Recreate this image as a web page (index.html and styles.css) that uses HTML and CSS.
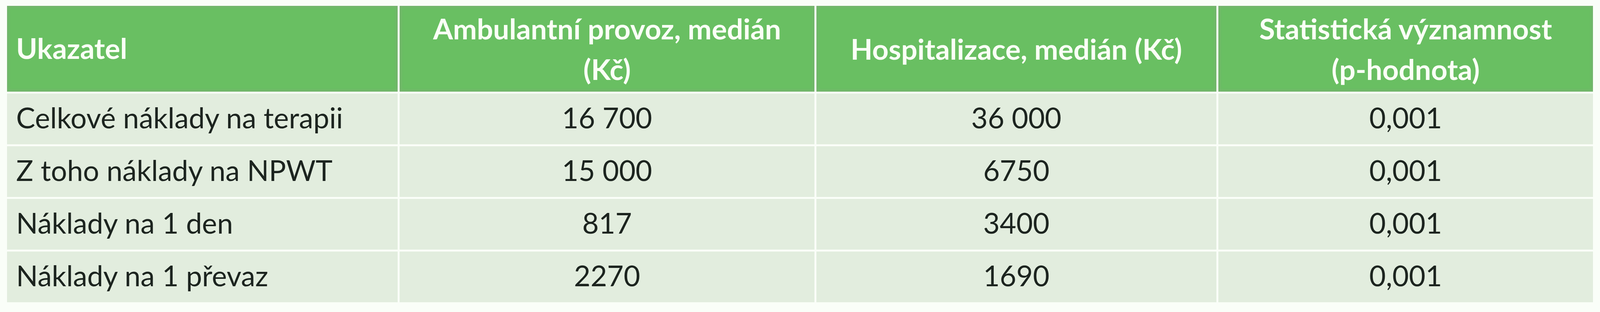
FILE: index.html
```html
<!DOCTYPE html>
<html lang="cs">
<head>
<meta charset="utf-8">
<title>Náklady</title>
<link rel="stylesheet" href="styles.css">
</head>
<body>
<div class="table">
  <div class="cell head left">Ukazatel</div>
  <div class="cell head">Ambulantní provoz, medián<br>(Kč)</div>
  <div class="cell head">Hospitalizace, medián (Kč)</div>
  <div class="cell head">Statistická významnost<br>(p-hodnota)</div>

  <div class="cell body left">Celkové náklady na terapii</div>
  <div class="cell body">16 700</div>
  <div class="cell body">36 000</div>
  <div class="cell body">0,001</div>

  <div class="cell body left">Z toho náklady na NPWT</div>
  <div class="cell body">15 000</div>
  <div class="cell body">6750</div>
  <div class="cell body">0,001</div>

  <div class="cell body left">Náklady na 1 den</div>
  <div class="cell body">817</div>
  <div class="cell body">3400</div>
  <div class="cell body">0,001</div>

  <div class="cell body left">Náklady na 1 převaz</div>
  <div class="cell body">2270</div>
  <div class="cell body">1690</div>
  <div class="cell body">0,001</div>
</div>
</body>
</html>
```

FILE: styles.css
```css
html, body {
  margin: 0;
  padding: 0;
  background: #fafef8;
  overflow: hidden;
}

body {
  font-family: Lato, "Open Sans", "Noto Sans", sans-serif;
  font-size: 1.787vw;
  line-height: 104px;
}

.table {
  display: grid;
  grid-template-columns: 1135fr 1205fr 1161fr 1089fr;
  grid-template-rows: 220px 130px 130px 130px 130px;
  gap: 5px;
  margin: 15px 0.43vw 0 0.43vw;
}

.cell {
  display: flex;
  align-items: center;
  justify-content: center;
  text-align: center;
  box-sizing: border-box;
  padding: 0 0.3vw;
  white-space: nowrap;
}

.cell.left {
  justify-content: flex-start;
  text-align: left;
  padding-left: 0.58vw;
}

.head {
  background: #69bf62;
  color: #fbfff6;
  font-weight: 700;
  box-shadow: inset 0 0 8px 2px #7cae74;
}

.head.left {
  padding-bottom: 4px;
}

.body {
  background: #e2edde;
  color: #1c241f;
  font-weight: 400;
  padding-bottom: 8px;
}
```
